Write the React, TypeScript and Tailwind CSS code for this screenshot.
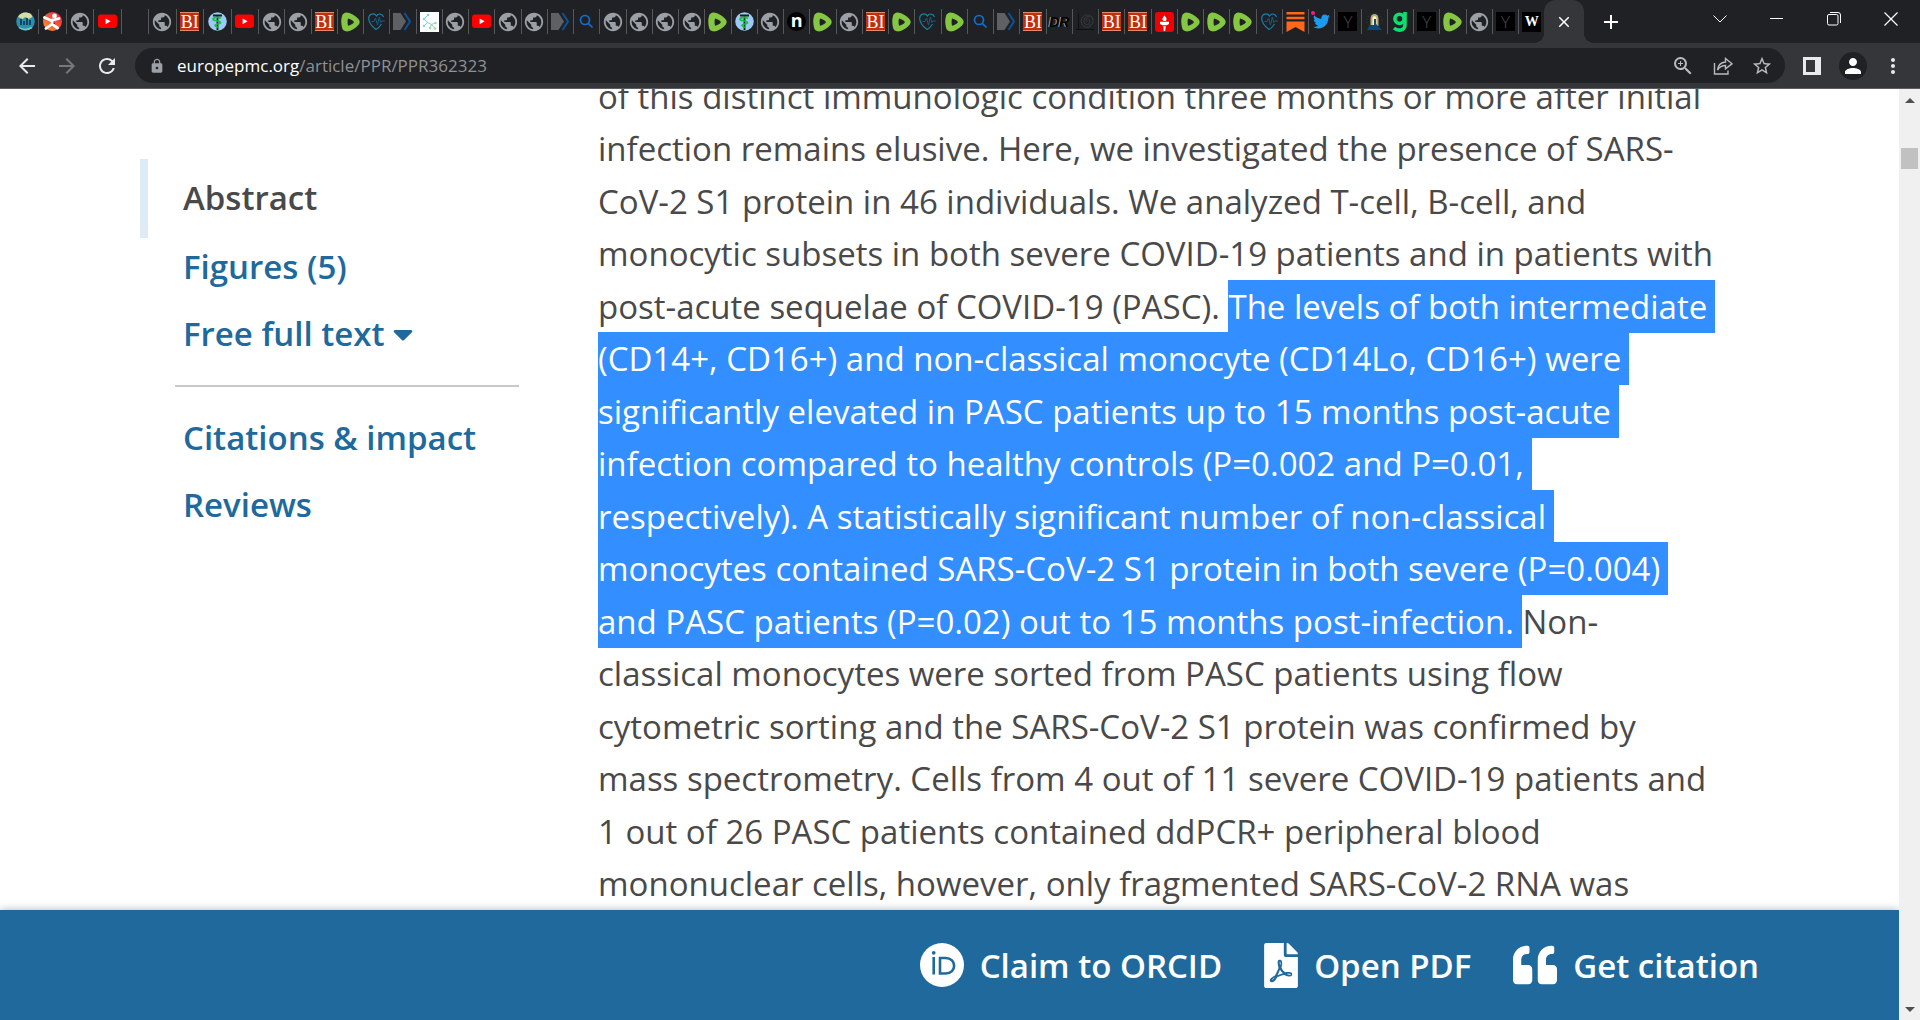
import React from "react";
import { FaFilePdf, FaQuoteLeft, FaCaretDown, FaTwitter } from "react-icons/fa";
import { MdPublic, MdLock, MdPerson, MdOutlineZoomIn, MdMoreVert, MdStarBorder, MdClose, MdAdd, MdArrowBack, MdArrowForward, MdRefresh } from "react-icons/md";

const Globe = () => <MdPublic className="size-[22px] shrink-0 text-[#9aa0a6]" />;

const YouTube = () => (
  <svg viewBox="0 0 19 19" className="size-[19px] shrink-0">
    <rect y="2.6" width="19" height="13.4" rx="3" fill="#f00" />
    <path d="M7.6 6.4 12.6 9.3 7.6 12.2Z" fill="#fff" />
  </svg>
);

const BI = () => (
  <span className="flex size-[19px] shrink-0 items-center justify-center border-y border-[#e08a70] bg-[#c22f0b] font-['Liberation_Serif'] text-[18px] leading-none text-white">
    BI
  </span>
);

const Rumble = () => (
  <svg viewBox="0 0 19 20" className="h-5 w-[19px] shrink-0">
    <path
      d="M4.2.7C7.5-.4 13.9 3 17.4 7c1.700 2 1.700 4 0 6C13.900 17 8.500 20 4.800 19.300 2.500 18.900 1.400 17.500.9 15-.1 10.500.1 7.500 1 4 1.500 2.200 2.500 1.200 4.200.7Z"
      fill="#85c742"
    />
    <path d="M7 6.600c2.300.4 4.500 1.600 5.600 3 .3.400.3.800 0 1.200-1.200 1.400-3.200 2.600-5.600 2.900-.6-2.300-.6-4.800 0-7.100Z" fill="#202124" />
  </svg>
);

const Caduceus = () => (
  <svg viewBox="0 0 19 19" className="size-[19px] shrink-0">
    <circle cx="9.500" cy="9.500" r="9.300" fill="#9cc9f5" />
    <path d="M5 3.500h9M9.500 3v15" stroke="#16240f" strokeWidth="1.800" />
    <path d="M13 6.200c-3-1.500-8-.8-8 1 0 2 7.500 1 7.500 3.300 0 2-5.500 1-5.500 3 0 1.300 3.500 1 3.500 2.500" fill="none" stroke="#12c23a" strokeWidth="1.600" />
  </svg>
);

const Heart = () => (
  <svg viewBox="0 0 19 19" className="size-[19px] shrink-0" fill="none">
    <path d="M16.500 5C15.500 1.500 11 1 9.500 4 7.500.8 1.800 1.200 1.700 6.500 1.700 10.500 5 14.500 9 17.500c2-1 4-3 5.500-5.500" stroke="#1b7fa3" strokeWidth="1.200" />
    <path d="M4.500 9.500h2.500l1.500-3.500 2 7 1.800-8 1.500 5.500 1-1.500h3" stroke="#175a86" strokeWidth="1" />
  </svg>
);

const Chevron = () => (
  <svg viewBox="0 0 19 19" className="size-[19px] shrink-0">
    <path d="M0 1h7.500l5.500 8.500L7.500 18H0Z" fill="#5f6063" />
    <path d="M11.500 1 17 9.500 11.500 18" fill="none" stroke="#0b5298" strokeWidth="2" />
  </svg>
);

const Search = () => (
  <svg viewBox="0 0 19 19" className="size-[19px] shrink-0" fill="none" stroke="#1170cf" strokeWidth="1.700">
    <circle cx="8" cy="8" r="4.500" />
    <path d="m11.300 11.300 4.200 4.200" />
  </svg>
);

const Wave = () => (
  <svg viewBox="0 0 19 19" className="size-[19px] shrink-0">
    <circle cx="9.500" cy="9.500" r="9.300" fill="#2b8fae" />
    <path d="M2 5C4 .5 10-1 15 2l1.500 3-4 2-3-2-3 2Z" fill="#d3dda5" />
    <path d="M5 7v6M8 9v4M11 6v7M14 8v5" stroke="#0d3146" strokeWidth="1.600" />
    <path d="M3 15.500c3.500 2.500 9 2.500 13 0" fill="none" stroke="#7fc5be" strokeWidth="1.500" />
  </svg>
);

const Runner = () => (
  <svg viewBox="0 0 19 19" className="size-[19px] shrink-0">
    <defs>
      <linearGradient id="runner" x1="1" y1="0" x2="0" y2="1">
        <stop stopColor="#e5184c" />
        <stop offset="1" stopColor="#ff9a2e" />
      </linearGradient>
    </defs>
    <circle cx="9.500" cy="9.500" r="9.500" fill="url(#runner)" />
    <circle cx="11.500" cy="4" r="2.400" fill="#fff" />
    <path d="M1.500 5.500 8 8.500M8.500 8.500 16 6.500M9.500 8 9 12 14.500 16M9 12 3 16.500" stroke="#fff" strokeWidth="2.800" strokeLinecap="round" />
  </svg>
);

const Molecule = () => (
  <svg viewBox="0 0 19 20" className="h-5 w-[19px] shrink-0">
    <path d="M0 0h19v20H0Z" fill="#fff" />
    <path d="M8 3 4 7l3.500 3.500L4 14M7.500 10.500l4 2 4-1.500M11.500 12.500 10 16M11.500 12.500l3.500 4" fill="none" stroke="#7fd3c4" strokeWidth="1" />
    <g fill="#9adb8f">
      <circle cx="8" cy="3" r="1.200" fill="#7fcfe6" />
      <circle cx="4" cy="7" r="1.200" fill="#7fcfe6" />
      <circle cx="4" cy="14" r="1.200" fill="#7fcfe6" />
      <circle cx="15.500" cy="11" r="1.200" />
      <circle cx="15" cy="16.500" r="1.200" />
      <circle cx="10" cy="16" r="1.200" />
    </g>
  </svg>
);

const LetterN = () => (
  <span className="flex size-[19px] shrink-0 items-center justify-center rounded-full bg-black pb-1 font-['Open_Sans'] text-[18px] leading-none font-bold text-white">n</span>
);
const Drudge = () => (
  <span className="shrink-0 font-['Liberation_Sans'] text-[14px] leading-none font-bold text-black italic [text-shadow:-1px_0_0_#a5a5a5]">DR</span>
);
const Spiral = () => (
  <svg viewBox="0 0 19 19" className="size-[19px] shrink-0" fill="none" stroke="#38393b">
    <path d="M2.500 1v17M0 17.500h18" stroke="#0f0f10" />
    <path d="M11.500 9.500a1.500 1.500 0 1 1 1.500-2 3 3 0 1 1-5 1.500 4.500 4.500 0 1 1 5 4.500M17.500 8a6.200 6.200 0 1 0-3 6.500" />
  </svg>
);
const Torch = () => (
  <svg viewBox="0 0 19 20" className="h-5 w-[19px] shrink-0">
    <rect width="19" height="20" rx="3" fill="#f00000" />
    <path d="M9.500 3.500c1.800 2 3 3.800 1.300 5.500H8.200C6.500 7.300 7.700 5.500 9.500 3.500ZM5 9.800h9V12l-2.500 1.200h-4L5 12ZM8.200 14.200h2.600L10.200 19H8.800Z" fill="#fff" />
  </svg>
);
const Substack = () => (
  <svg viewBox="0 0 19 20" className="h-5 w-[19px] shrink-0" fill="#ff6719">
    <path d="M.5 0h18v2.500H.5ZM.5 4.700h18v2.500H.5ZM.5 9.400h18V20l-9-5-9 5Z" />
  </svg>
);
const Twitter = () => (
  <span className="relative flex shrink-0">
    <FaTwitter className="size-[17px] text-[#1d9bf0]" />
    <span className="absolute -top-0.5 -left-0.5 size-1 rounded-full bg-[#f91880]" />
  </span>
);
const LetterY = () => (
  <span className="flex size-[19px] shrink-0 items-center justify-center bg-black font-['Open_Sans'] text-[17px] leading-none font-light text-[#4a4a4c]">Y</span>
);
const Lamp = () => (
  <svg viewBox="0 0 19 19" className="size-[19px] shrink-0">
    <circle cx="9.500" cy="8.500" r="7.500" fill="none" stroke="#184a6d" strokeDasharray="1 2" />
    <path d="M5.500 14V6.500a4 4.500 0 0 1 8 0V14Z" fill="#b9a874" />
    <path d="M7.500 13V6.500a2 2.500 0 0 1 4 0V13Z" fill="#fff3c4" />
    <path d="M9 7h2v5l6 6H2l3-5h4Z" fill="#124877" />
  </svg>
);
const LetterG = () => (
  <svg viewBox="0 0 19 20" className="h-5 w-[19px] shrink-0" fill="none" stroke="#0be070" strokeWidth="3.600">
    <circle cx="8.500" cy="6.800" r="4.600" />
    <path d="M14 0v12.500c0 7-7.500 6.500-11 3.500" />
  </svg>
);
const LetterW = () => (
  <span className="flex h-5 w-[19px] shrink-0 items-center justify-center bg-black font-['Liberation_Serif'] text-[14px] leading-none font-bold text-white">W</span>
);
const Blank = () => <span className="size-[19px] shrink-0" />;

type Icon = () => React.JSX.Element;
type TabInfo = [string, Icon];

const globe: TabInfo = ["Web page", Globe];
const yt: TabInfo = ["YouTube", YouTube];
const bi: TabInfo = ["Business Insider", BI];
const rumble: TabInfo = ["Rumble", Rumble];
const heart: TabInfo = ["Health", Heart];
const chevron: TabInfo = ["Journal", Chevron];
const search: TabInfo = ["Search", Search];
const caduceus: TabInfo = ["Medical", Caduceus];
const letterY: TabInfo = ["Y", LetterY];

const wideTabs: TabInfo[] = [["Wave", Wave], ["Runner", Runner], globe, yt, ["Blank", Blank], globe, bi, caduceus, yt];
const narrowTabs: TabInfo[] = [
  globe, globe, bi, rumble, heart, chevron, ["Molecule", Molecule], globe, yt, globe, globe, chevron, search,
  globe, globe, globe, globe, rumble, caduceus, globe, ["n", LetterN], rumble, globe, bi, rumble, heart, rumble,
  search, chevron, bi, ["Report", Drudge], ["Spiral", Spiral], bi, bi, ["Torch", Torch], rumble, rumble, rumble,
  heart, ["Substack", Substack], ["Twitter", Twitter], letterY, ["Lamp", Lamp], ["g", LetterG], letterY, rumble,
  globe, letterY, ["W", LetterW],
];

const Tabs = ({ items }: { items: TabInfo[] }) => (
  <>
    {items.map(([name, Glyph], i) => (
      <button
        key={i}
        aria-label={name}
        className="flex h-[25px] min-w-0 flex-1 items-center justify-center overflow-hidden border-r border-[#56575a]"
      >
        <Glyph />
      </button>
    ))}
  </>
);

const TabStrip = () => (
  <div className="flex h-[43px] items-start bg-[#202124] pl-3 text-white">
    <div className="flex w-[247px] shrink-0 pt-[9px]">
      <Tabs items={wideTabs} />
    </div>
    <div className="flex min-w-0 flex-1 pt-[9px] [&>button:last-child]:border-0">
      <Tabs items={narrowTabs} />
    </div>
    <div className="flex h-full shrink-0 items-stretch">
      <div className="-ml-2.5 h-2.5 w-2.5 self-end bg-[radial-gradient(circle_at_0_0,transparent_10px,#35363a_10px)]" />
      <button aria-label="Close tab" className="flex w-10 items-center justify-center rounded-t-xl bg-[#35363a]">
        <MdClose className="size-[18px]" />
      </button>
      <div className="h-2.5 w-2.5 self-end bg-[radial-gradient(circle_at_100%_0,transparent_10px,#35363a_10px)]" />
      <button aria-label="New tab" className="flex w-[34px] items-center justify-center">
        <MdAdd className="size-6" />
      </button>
    </div>
    <div className="ml-[63px] flex h-[37px] shrink-0 items-stretch">
      <button aria-label="Search tabs" className="flex w-[57px] items-center justify-center">
        <svg viewBox="0 0 14 8" className="h-2 w-3.5" fill="none" stroke="#fff"><path d="m.5.500 6.500 6.500L13.500.500" /></svg>
      </button>
      <button aria-label="Minimize" className="flex w-[57px] items-center justify-center">
        <span className="h-px w-[13px] bg-white" />
      </button>
      <button aria-label="Restore" className="flex w-[57px] items-center justify-center">
        <svg viewBox="0 0 14 14" className="size-3.5" fill="none" stroke="#fff"><rect x=".5" y="2.500" width="10.500" height="10.500" rx="1.500" /><path d="M3 .5h8a2.500 2.500 0 0 1 2.500 2.500v8" /></svg>
      </button>
      <button aria-label="Close" className="flex w-[58px] items-center justify-center">
        <svg viewBox="0 0 14 14" className="size-3.5" stroke="#fff" strokeWidth="1.200"><path d="m.5.500 13 13M13.500.500l-13 13" /></svg>
      </button>
    </div>
  </div>
);

const Toolbar = () => (
  <div className="flex h-[46px] items-center border-b border-[#5b5c5f] bg-[#35363a] pr-[15px] pl-[15px] text-[#e8eaed]">
    <button aria-label="Back" className="mr-4 flex"><MdArrowBack className="size-6" /></button>
    <button aria-label="Forward" className="mr-4 flex text-[#77787b]"><MdArrowForward className="size-6" /></button>
    <button aria-label="Reload" className="mr-4 flex"><MdRefresh className="size-6" /></button>
    <div className="flex h-[35px] min-w-0 flex-1 items-center rounded-full bg-[#202124] pr-3 pl-3.5">
      <MdLock className="size-4 shrink-0 text-[#9aa0a6]" />
      <label className="relative ml-3 flex flex-1 items-center font-['Open_Sans',sans-serif] text-[17px]">
        <span aria-hidden="true" className="text-[#8e9195]"><span className="text-white">europepmc.org</span>/article/PPR/PPR362323</span>
        <input
          aria-label="Address"
          defaultValue="europepmc.org/article/PPR/PPR362323"
          className="absolute inset-0 w-full bg-transparent text-transparent outline-none"
        />
      </label>
      <div className="flex shrink-0 items-center gap-[18px] text-[#b9bbbe]">
        <button aria-label="Zoom" className="flex"><MdOutlineZoomIn className="size-6" /></button>
        <button aria-label="Share" className="flex">
          <svg viewBox="0 0 20 18" className="h-[18px] w-5" fill="none" stroke="currentColor" strokeWidth="1.400">
            <path d="M1.500 6v11H15v-3.500" />
            <path d="M4.500 13c.5-5 3.500-7.500 8-8V1.500L19 6.800l-6.500 5V8.500c-4 0-6 1.500-8 4.500Z" />
          </svg>
        </button>
        <button aria-label="Bookmark" className="flex"><MdStarBorder className="size-[22px]" /></button>
      </div>
    </div>
    <button aria-label="Side panel" className="ml-[18px] flex h-[18px] w-[18px] items-center bg-[#e8eaed] pl-[3px]">
      <span className="h-3 w-[9px] bg-[#35363a]" />
    </button>
    <button aria-label="Profile" className="ml-[18px] flex size-7 items-center justify-center rounded-full bg-[#202124]">
      <MdPerson className="size-6 text-white" />
    </button>
    <button aria-label="Menu" className="ml-3.5 flex w-6"><MdMoreVert className="size-6" /></button>
  </div>
);

const SideNav = () => (
  <nav className="w-[379px] shrink-0 pt-[70px] text-[33px] leading-[1.500] font-semibold text-[#20699c]">
    <a href="#abstract" className="flex h-[79px] items-center border-l-8 border-[#deebf5] pb-0.5 pl-[35px] text-[#494949]">Abstract</a>
    <a href="#figures" className="flex h-[59px] items-center pb-0.5 pl-[43px]">Figures (5)</a>
    <a href="#fulltext" className="flex h-[75px] items-center gap-0.5 pb-0.5 pl-[43px]">
      Free full text <FaCaretDown className="size-8" />
    </a>
    <hr className="mt-[13px] mb-[18px] ml-[35px] border-t-2 border-[#c8c8c8]" />
    <a href="#citations" className="flex h-[67px] items-center pb-0.5 pl-[43px]">Citations &amp; impact</a>
    <a href="#reviews" className="flex h-[67px] items-center pb-0.5 pl-[43px]">Reviews</a>
  </nav>
);

const Abstract = () => (
  <article id="abstract" className="-mt-[18px] ml-[79px] min-w-0 flex-1 text-[33px] leading-[1.590] text-[#494949]">
    <p>
      of this distinct immunologic condition three months or more after initial infection remains elusive. Here, we
      investigated the presence of SARS-CoV-2 S1 protein in 46 individuals. We analyzed T-cell, B-cell, and monocytic
      subsets in both severe COVID-19 patients and in patients with post-acute sequelae of COVID-19 (PASC).{" "}
      <mark className="bg-[#338fff] box-decoration-clone py-1 text-white shadow-[8px_0_0_#338fff]">
        The levels of both intermediate (CD14+, CD16+) and non-classical monocyte (CD14Lo, CD16+) were significantly
        elevated in PASC patients up to 15 months post-acute infection compared to healthy controls (P=0.002 and P=0.01,
        respectively). A statistically significant number of non-classical monocytes contained SARS-CoV-2 S1 protein in
        both severe (P=0.004) and PASC patients (P=0.02) out to 15 months post-infection.
      </mark>{" "}
      Non-classical monocytes were sorted from PASC patients using flow cytometric sorting and the SARS-CoV-2 S1 protein
      was confirmed by mass spectrometry. Cells from 4 out of 11 severe COVID-19 patients and 1 out of 26 PASC patients
      contained ddPCR+ peripheral blood mononuclear cells, however, only fragmented SARS-CoV-2 RNA was
    </p>
  </article>
);

const OrcidIcon = () => (
  <svg viewBox="0 0 44 44" className="size-11">
    <circle cx="22" cy="22" r="22" fill="#fff" />
    <circle cx="13.700" cy="9.800" r="1.900" fill="#20699c" />
    <path d="M13.700 14v17.500M20 15h5.500c11.500 0 11.500 15.500 0 15.500H20Z" fill="none" stroke="#20699c" strokeWidth="2.600" />
  </svg>
);

const ActionBar = () => (
  <footer className="flex h-[110px] shrink-0 items-center justify-end gap-[42px] bg-[#20699c] pr-[140px] text-[33px] leading-none font-semibold text-white shadow-[0_0_8px_rgba(0,0,0,0.3)]">
    <button className="flex items-center gap-4"><OrcidIcon />Claim to ORCID</button>
    <button className="flex items-center gap-4"><FaFilePdf className="h-[45px] w-[34px]" />Open PDF</button>
    <button className="flex items-center gap-4"><FaQuoteLeft className="size-11" />Get citation</button>
  </footer>
);

const Scrollbar = () => (
  <div className="flex w-[21px] shrink-0 flex-col items-center bg-[#f0f0f0] pt-[9px] pb-2">
    <span className="border-x-[5px] border-b-[5px] border-x-transparent border-b-[#505050]" />
    <span className="mt-[45px] h-[21px] w-[17px] bg-[#c1c1c1]" />
    <span className="mt-auto border-x-[5px] border-t-[5px] border-x-transparent border-t-[#505050]" />
  </div>
);

export default function App() {
  return (
    <div className="flex h-screen flex-col overflow-hidden bg-white font-['Open_Sans',sans-serif]">
      <header className="shrink-0">
        <TabStrip />
        <Toolbar />
      </header>
      <div className="flex min-h-0 flex-1">
        <div className="flex min-w-0 flex-1 flex-col">
          <main className="flex min-h-0 flex-1 overflow-hidden pr-[182px] pl-[140px]">
            <SideNav />
            <Abstract />
          </main>
          <ActionBar />
        </div>
        <Scrollbar />
      </div>
    </div>
  );
}
